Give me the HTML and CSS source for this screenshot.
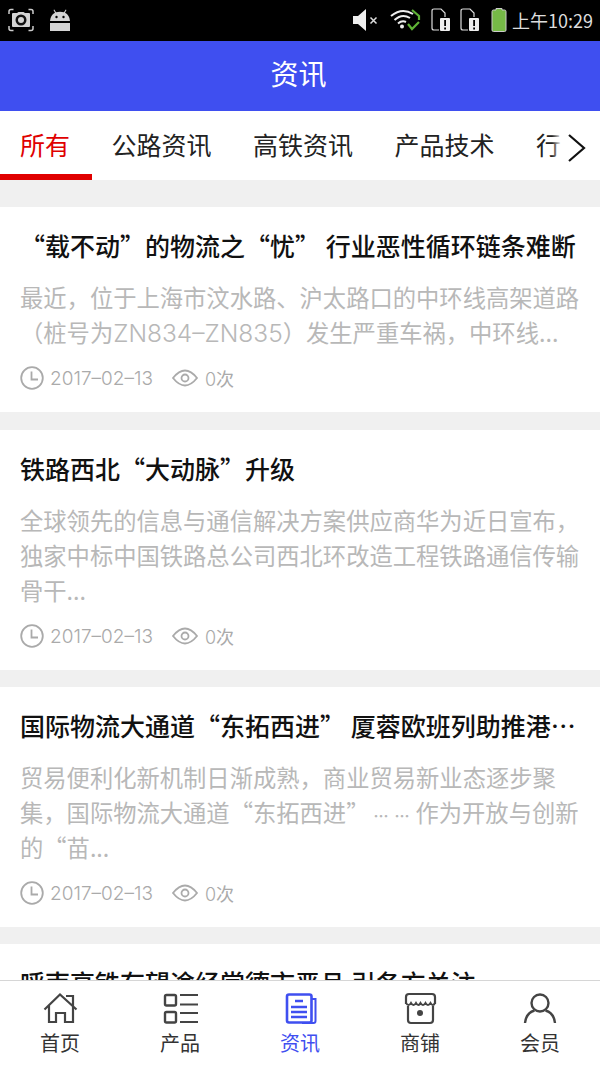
FILE: index.html
```html
<!DOCTYPE html>
<html lang="zh-CN">
<head>
    <meta charset="UTF-8">
    <meta name="viewport" content="width=device-width, initial-scale=1.0">
    <title>资讯</title>
    <link rel="stylesheet" href="styles.css">
</head>
<body>
<div class="page">
    <div class="status-bar">
        <div class="status-left">
            <svg width="26" height="24" viewBox="0 0 26 24">
                <path d="M1 6V3.500Q1 1.500 3 1.500H5.500M20.500 1.500H23Q25 1.500 25 3.500V6M25 18V20.500Q25 22.500 23 22.500H20.500M5.500 22.500H3Q1 22.500 1 20.500V18" fill="none" stroke="#ccc" stroke-width="1.500"/>
                <path d="M5 5H9L10.500 4H15.500L17 5H21Q22 5 22 6V18Q22 19 21 19H5Q4 19 4 18V6Q4 5 5 5Z" fill="#d4d4d4"/>
                <circle cx="13" cy="12" r="5.500" fill="#111"/>
                <circle cx="13" cy="12" r="3" fill="#d4d4d4"/>
            </svg>
            <svg width="20" height="24" viewBox="0 0 20 24">
                <path d="M0 13Q.5 7 5 4.800L3.500 2 4.300 1.500 6 4.300Q10 3 14 4.300L15.700 1.500 16.500 2 15 4.800Q19.500 7 20 13Z" fill="#d4d4d4"/>
                <circle cx="6.500" cy="9" r="1.200" fill="#000"/>
                <circle cx="13.500" cy="9" r="1.200" fill="#000"/>
                <path d="M0 15H20V23H0Z" fill="#d4d4d4"/>
            </svg>
        </div>
        <div class="status-right">
            <svg class="st-vol" width="26" height="24" viewBox="0 0 26 24">
                <path d="M0 8H5L13 1V23L5 16H0Z" fill="#eee"/>
                <path d="M17.500 9.500L23.500 15.500M23.500 9.500L17.500 15.500" stroke="#ddd" stroke-width="1.500"/>
            </svg>
            <svg class="st-wifi" width="32" height="24" viewBox="0 0 32 24">
                <path d="M1 8Q12 -1 23 6M4.500 12Q12 5 20 10M8 15.500Q12 12 16 14" fill="none" stroke="#eee" stroke-width="2"/>
                <circle cx="12" cy="18.500" r="2" fill="#eee"/>
                <path d="M22 2L29 8V12M29 14L22 21L18 16" fill="none" stroke="#5fb336" stroke-width="2.200"/>
            </svg>
            <svg class="st-sim" width="20" height="24" viewBox="0 0 20 24">
                <path d="M1 20V3Q1 1 3 1H10L14 5V9" fill="none" stroke="#ddd" stroke-width="1.200"/>
                <path d="M1 20Q1 22 3 22H8" fill="none" stroke="#ddd" stroke-width="1.200"/>
                <rect x="9" y="10" width="10" height="13" rx="1" fill="#eee"/>
                <rect x="13.200" y="12" width="1.800" height="6" fill="#000"/>
                <rect x="13.200" y="19.500" width="1.800" height="2" fill="#000"/>
            </svg>
            <svg class="st-sim-last" width="20" height="24" viewBox="0 0 20 24">
                <path d="M1 20V3Q1 1 3 1H10L14 5V9" fill="none" stroke="#ddd" stroke-width="1.200"/>
                <path d="M1 20Q1 22 3 22H8" fill="none" stroke="#ddd" stroke-width="1.200"/>
                <rect x="9" y="10" width="10" height="13" rx="1" fill="#eee"/>
                <rect x="13.200" y="12" width="1.800" height="6" fill="#000"/>
                <rect x="13.200" y="19.500" width="1.800" height="2" fill="#000"/>
            </svg>
            <svg class="st-batt" width="16" height="24" viewBox="0 0 16 24">
                <path d="M5 2V.5H11V2H13.500Q15 2 15 3.500V22Q15 23.500 13.500 23.500H2.500Q1 23.500 1 22V3.500Q1 2 2.500 2Z" fill="#76b947" stroke="#ccc" stroke-width="1"/>
            </svg>
            <span class="clock">上午10:29</span>
        </div>
    </div>

    <div class="header">资讯</div>

    <div class="tabs">
        <a class="tab active">所有</a>
        <a class="tab">公路资讯</a>
        <a class="tab">高铁资讯</a>
        <a class="tab">产品技术</a>
        <a class="tab">行业资讯</a>
        <div class="tabs-more">
            <svg width="20" height="30" viewBox="0 0 20 30"><path d="M2 2L17 15L2 28" fill="none" stroke="#111" stroke-width="2.200"/></svg>
        </div>
    </div>

    <div class="news-list">
        <div class="news-item">
            <h3 class="news-title">“载不动”的物流之“忧” 行业恶性循环链条难断</h3>
            <p class="news-desc">最近，位于上海市汶水路、沪太路口的中环线高架道路（桩号为<span class="lat lat-big">ZN834–ZN835</span>）发生严重车祸，中环线...</p>
            <div class="news-meta">
                <svg class="ico-clock" width="24" height="24" viewBox="0 0 24 24"><circle cx="12" cy="12" r="10.800" fill="none" stroke="#aaa" stroke-width="1.800"/><path d="M11.500 5.500V13.500H18" fill="none" stroke="#aaa" stroke-width="1.800"/></svg>
                <span class="date lat">2017–02–13</span>
                <svg class="ico-eye" width="26" height="18" viewBox="0 0 26 18"><path d="M1 9Q13 -6 25 9Q13 24 1 9Z" fill="none" stroke="#aaa" stroke-width="1.800"/><circle cx="13" cy="9" r="3.500" fill="none" stroke="#aaa" stroke-width="1.800"/></svg>
                <span><span class="lat">0</span>次</span>
            </div>
        </div>
        <div class="news-item">
            <h3 class="news-title">铁路西北“大动脉”升级</h3>
            <p class="news-desc">全球领先的信息与通信解决方案供应商华为近日宣布，独家中标中国铁路总公司西北环改造工程铁路通信传输骨干...</p>
            <div class="news-meta">
                <svg class="ico-clock" width="24" height="24" viewBox="0 0 24 24"><circle cx="12" cy="12" r="10.800" fill="none" stroke="#aaa" stroke-width="1.800"/><path d="M11.500 5.500V13.500H18" fill="none" stroke="#aaa" stroke-width="1.800"/></svg>
                <span class="date lat">2017–02–13</span>
                <svg class="ico-eye" width="26" height="18" viewBox="0 0 26 18"><path d="M1 9Q13 -6 25 9Q13 24 1 9Z" fill="none" stroke="#aaa" stroke-width="1.800"/><circle cx="13" cy="9" r="3.500" fill="none" stroke="#aaa" stroke-width="1.800"/></svg>
                <span><span class="lat">0</span>次</span>
            </div>
        </div>
        <div class="news-item">
            <h3 class="news-title">国际物流大通道“东拓西进” 厦蓉欧班列助推港…</h3>
            <p class="news-desc">贸易便利化新机制日渐成熟，商业贸易新业态逐步聚集，国际物流大通道“东拓西进”<span class="dots">……</span>作为开放与创新的“苗...</p>
            <div class="news-meta">
                <svg class="ico-clock" width="24" height="24" viewBox="0 0 24 24"><circle cx="12" cy="12" r="10.800" fill="none" stroke="#aaa" stroke-width="1.800"/><path d="M11.500 5.500V13.500H18" fill="none" stroke="#aaa" stroke-width="1.800"/></svg>
                <span class="date lat">2017–02–13</span>
                <svg class="ico-eye" width="26" height="18" viewBox="0 0 26 18"><path d="M1 9Q13 -6 25 9Q13 24 1 9Z" fill="none" stroke="#aaa" stroke-width="1.800"/><circle cx="13" cy="9" r="3.500" fill="none" stroke="#aaa" stroke-width="1.800"/></svg>
                <span><span class="lat">0</span>次</span>
            </div>
        </div>
        <div class="news-item">
            <h3 class="news-title">呼南高铁有望途经常德市恶且 引各方关注</h3>
        </div>
    </div>

    <div class="footer">
        <a class="foot-item">
            <svg width="36" height="34" viewBox="0 0 36 34"><path d="M2.500 17.500L18 2.500L34.500 17.500M24 4H31V13M7 13V30H14V21H23V30H31V13" fill="none" stroke="#444" stroke-width="2.200"/></svg>
            <span>首页</span>
        </a>
        <a class="foot-item">
            <svg width="36" height="34" viewBox="0 0 36 34"><rect x="3" y="3" width="11" height="10.500" rx="1.500" fill="none" stroke="#444" stroke-width="2.400"/><rect x="3" y="20" width="11" height="10.500" rx="1.500" fill="none" stroke="#444" stroke-width="2.400"/><path d="M18 3H36M18 12.500H36M18 21H36M18 30H36" stroke="#444" stroke-width="2.200"/></svg>
            <span>产品</span>
        </a>
        <a class="foot-item on">
            <svg width="36" height="34" viewBox="0 0 36 34"><rect x="5" y="2.500" width="24.500" height="28" rx="2" fill="none" stroke="#3f4ff0" stroke-width="2.600"/><path d="M30 7H33.500V29Q33.500 31 31.500 31H20" fill="none" stroke="#3f4ff0" stroke-width="2"/><path d="M13 9H21M9 15H25M9 20H25M9 25H25" stroke="#3f4ff0" stroke-width="2.400"/></svg>
            <span>资讯</span>
        </a>
        <a class="foot-item">
            <svg width="36" height="34" viewBox="0 0 36 34"><path d="M6 14V28Q6 31 9 31H28Q31 31 31 28V14" fill="none" stroke="#444" stroke-width="2.200"/><path d="M4 12V5Q4 2 7 2H30Q33 2 33 5V12" fill="none" stroke="#444" stroke-width="2.200"/><path d="M4 11Q6.500 15 9 11Q11.500 15 14 11Q16.500 15 18.500 11Q21 15 23.500 11Q26 15 28.500 11Q31 15 33 11" fill="none" stroke="#444" stroke-width="2"/><circle cx="18" cy="21" r="3" fill="#444"/></svg>
            <span>商铺</span>
        </a>
        <a class="foot-item">
            <svg width="36" height="34" viewBox="0 0 36 34"><circle cx="18" cy="11" r="8.500" fill="none" stroke="#444" stroke-width="2.400"/><path d="M3 31Q4 21 12.500 18.500M33 31Q32 21 23.500 18.500" fill="none" stroke="#444" stroke-width="2.400"/></svg>
            <span>会员</span>
        </a>
    </div>
</div>
</body>
</html>
```
FILE: styles.css
```css
* {
    box-sizing: border-box;
}
body {
    margin: 0;
    font-family: "Noto Sans CJK SC", "Liberation Sans", sans-serif;
    background: #f0f0f0;
}
a {
    color: inherit;
    text-decoration: none;
}
.page {
    height: 1067px;
    display: flex;
    flex-direction: column;
    overflow: hidden;
}
.status-bar {
    flex: none;
    height: 41px;
    background: #000;
    display: flex;
    justify-content: space-between;
    align-items: center;
    padding: 0 7px 1px 8px;
}
.status-left {
    display: flex;
    align-items: center;
    gap: 16px;
}
.status-right {
    display: flex;
    align-items: center;
}
.st-vol {
    margin-right: 11px;
}
.st-wifi {
    margin-right: 9px;
}
.st-sim {
    margin-right: 9px;
}
.st-sim-last {
    margin-right: 11px;
}
.st-batt {
    margin-right: 5px;
}
.clock {
    color: #ddd;
    font-size: 18px;
}
.header {
    flex: none;
    height: 70px;
    background: #3f4ff0;
    color: #fff;
    font-size: 28px;
    line-height: 65px;
    padding-right: 3px;
    text-align: center;
}
.tabs {
    flex: none;
    height: 69px;
    background: #fff;
    display: flex;
    position: relative;
    overflow: hidden;
}
.tab {
    flex: none;
    height: 69px;
    line-height: 66px;
    padding: 0 21.500px 0 20px;
    font-size: 25px;
    color: #222;
    white-space: nowrap;
}
.tab.active {
    color: #e00000;
    border-bottom: 6px solid #e00000;
}
.tabs-more {
    position: absolute;
    right: 0;
    top: 0;
    width: 48px;
    height: 69px;
    display: flex;
    align-items: center;
    padding: 4px 0 0 15px;
    background: linear-gradient(to right, rgba(255, 255, 255, 0), #fff 20%);
}
.news-list {
    flex: 1;
    min-height: 0;
    overflow: hidden;
    padding-top: 27px;
}
.news-item {
    background: #fff;
    padding: 18px 20px 0;
    height: 205px;
    margin-bottom: 18px;
}
.news-item:nth-child(n+2) {
    height: 240px;
    margin-bottom: 17px;
}
.news-title {
    margin: 0;
    font-size: 25px;
    line-height: 40px;
    font-weight: 500;
    color: #111;
    white-space: nowrap;
    overflow: hidden;
}
.news-desc {
    margin: 15px 0 0;
    font-size: 23.300px;
    line-height: 35px;
    color: #b8b8b8;
}
.dots {
    font-size: 15px;
    font-weight: 700;
    line-height: 1;
    letter-spacing: 6px;
    margin-left: 4px;
}
.news-meta {
    display: flex;
    align-items: center;
    margin-top: 15px;
    font-size: 18px;
    color: #aaa;
}
.lat {
    font-family: Inter, "Liberation Sans", sans-serif;
    font-weight: 300;
    line-height: 1;
}
.lat-big {
    font-size: 24.500px;
}
.ico-clock {
    margin-right: 6px;
}
.date {
    font-size: 19px;
    margin-right: 19px;
}
.ico-eye {
    margin-right: 7px;
}
.footer {
    flex: none;
    height: 87px;
    background: #fff;
    border-top: 1px solid #d6d6d6;
    display: flex;
}
.foot-item {
    flex: 1;
    display: flex;
    flex-direction: column;
    align-items: center;
    padding-top: 11px;
    font-size: 20px;
    line-height: 28px;
    color: #333;
}
.foot-item svg {
    display: block;
    margin-bottom: 3px;
}
.foot-item.on {
    color: #3f4ff0;
}
```
